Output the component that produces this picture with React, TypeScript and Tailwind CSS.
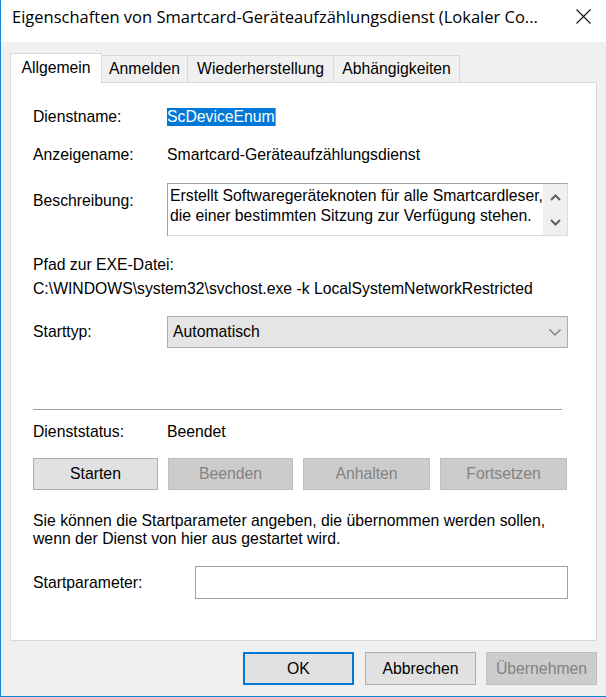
import React from "react";

const font = { fontFamily: '"Liberation Sans", Arial, sans-serif' };

function Tab({ label, width, active }: { label: string; width: string; active?: boolean }) {
  if (active) {
    return (
      <div
        className={`${width} relative z-10 -mb-px h-[30px] border border-b-0 border-[#d9d9d9] bg-white pt-[5px] text-center text-[15.75px] leading-[18px] text-black`}
      >
        {label}
      </div>
    );
  }
  return (
    <div
      className={`${width} h-[27px] border-t border-r border-[#d9d9d9] bg-[#f0f0f0] pt-[4px] text-center text-[15.75px] leading-[18px] text-black`}
    >
      {label}
    </div>
  );
}

function WinButton({ label, disabled, width = "w-[125px]" }: { label: string; disabled?: boolean; width?: string }) {
  return (
    <div
      className={`${width} flex h-[32px] items-center justify-center border text-[15.75px] leading-[18px] ${
        disabled ? "border-[#bfbfbf] bg-[#cccccc] text-[#838383]" : "border-[#adadad] bg-[#e1e1e1] text-black"
      }`}
    >
      {label}
    </div>
  );
}

function Chevron({ dir }: { dir: "up" | "down" }) {
  return (
    <svg width="11" height="7" viewBox="0 0 11 7" className="block">
      <path
        d={dir === "up" ? "M1 6 L5.5 1.5 L10 6" : "M1 1 L5.5 5.5 L10 1"}
        fill="none"
        stroke="#606060"
        strokeWidth="2"
      />
    </svg>
  );
}

export default function App() {
  return (
    <div className="h-[697px] w-[606px] overflow-hidden border-b border-l border-[#1883d7] bg-[#f0f0f0]" style={font}>
      {/* title bar */}
      <div className="flex h-[42px] items-start bg-white">
        <div
          className="ml-[11px] mt-[6px] whitespace-nowrap text-[16.5px] leading-[22px] text-black"
          style={{ fontFamily: '"Open Sans", "Noto Sans", sans-serif' }}
        >
          Eigenschaften von Smartcard-Geräteaufzählungsdienst (Lokaler Co...
        </div>
        <svg width="15" height="15" viewBox="0 0 15 15" className="ml-auto mr-[15px] mt-[9px] shrink-0">
          <path d="M0.5 0.5 L14.5 14.5 M14.5 0.5 L0.5 14.5" stroke="#111" strokeWidth="1.1" />
        </svg>
      </div>

      {/* tabs */}
      <div className="ml-[9px] mt-[11px] flex h-[29px] items-end">
        <Tab label="Allgemein" width="w-[92px]" active />
        <Tab label="Anmelden" width="w-[86px]" />
        <Tab label="Wiederherstellung" width="w-[146px]" />
        <Tab label="Abhängigkeiten" width="w-[126px]" />
      </div>

      {/* panel */}
      <div className="ml-[9px] h-[559px] w-[587px] border border-[#d9d9d9] bg-white pl-[22px] pt-[25px] text-[15.75px] leading-[18px] text-black">
        <div className="flex h-[18px]">
          <div className="w-[134px]">Dienstname:</div>
          <div className="flex">
            <span className="bg-[#0078d7] text-white">ScDeviceEnum</span>
            <span className="w-px bg-[#f08a24]" />
          </div>
        </div>

        <div className="mt-[20px] flex h-[18px]">
          <div className="w-[134px]">Anzeigename:</div>
          <div>Smartcard-Geräteaufzählungsdienst</div>
        </div>

        <div className="mt-[19px] flex">
          <div className="mt-[9px] w-[134px]">Beschreibung:</div>
          <div className="flex h-[53px] w-[401px] border border-t-[#a0a0a0] border-l-[#a0a0a0] border-r-[#dcdcdc] border-b-[#dcdcdc]">
            <div className="min-w-0 flex-1 overflow-hidden pl-[2px] pt-[2px] leading-[20px]">
              <div className="whitespace-nowrap">Erstellt Softwaregeräteknoten für alle Smartcardleser,</div>
              <div className="whitespace-nowrap">die einer bestimmten Sitzung zur Verfügung stehen.</div>
            </div>
            <div className="flex w-[24px] shrink-0 flex-col items-center bg-[#f0f0f0] pt-[10px]">
              <Chevron dir="up" />
              <div className="mt-[18px]">
                <Chevron dir="down" />
              </div>
            </div>
          </div>
        </div>

        <div className="mt-[20px]">Pfad zur EXE-Datei:</div>
        <div className="mt-[6px] whitespace-nowrap">C:\WINDOWS\system32\svchost.exe -k LocalSystemNetworkRestricted</div>

        <div className="mt-[18px] flex items-center">
          <div className="w-[134px]">Starttyp:</div>
          <div className="flex h-[32px] w-[401px] items-center border border-[#adadad] bg-[#e5e5e5] pl-[5px] pr-[6px]">
            <span>Automatisch</span>
            <svg width="12" height="7" viewBox="0 0 12 7" className="ml-auto">
              <path d="M0.5 0.5 L6 6 L11.5 0.5" fill="none" stroke="#707070" strokeWidth="1.2" />
            </svg>
          </div>
        </div>

        <div className="mt-[61px] w-[529px] border-t border-[#a0a0a0]" />

        <div className="mt-[13px] flex h-[18px]">
          <div className="w-[134px]">Dienststatus:</div>
          <div>Beendet</div>
        </div>

        <div className="mt-[17px] flex gap-[10px]">
          <WinButton label="Starten" />
          <WinButton label="Beenden" disabled />
          <WinButton label="Anhalten" disabled width="w-[127px]" />
          <WinButton label="Fortsetzen" disabled width="w-[127px]" />
        </div>

        <div className="mt-[22px] whitespace-nowrap">
          <div>Sie können die Startparameter angeben, die übernommen werden sollen,</div>
          <div>wenn der Dienst von hier aus gestartet wird.</div>
        </div>

        <div className="mt-[18px] flex items-center">
          <div className="w-[162px]">Startparameter:</div>
          <div className="h-[33px] w-[373px] border border-[#a0a0a0] bg-white" />
        </div>
      </div>

      {/* dialog buttons */}
      <div className="ml-[242px] mt-[11px] flex gap-[11px] text-[15.75px] leading-[18px]">
        <div className="flex h-[33px] w-[111px] items-center justify-center border-2 border-[#0078d7] bg-[#e1e1e1] text-black">
          OK
        </div>
        <WinButton label="Abbrechen" width="w-[111px] h-[33px]" />
        <div className="-ml-px">
          <WinButton label="Übernehmen" disabled width="w-[111px] h-[33px]" />
        </div>
      </div>
    </div>
  );
}
